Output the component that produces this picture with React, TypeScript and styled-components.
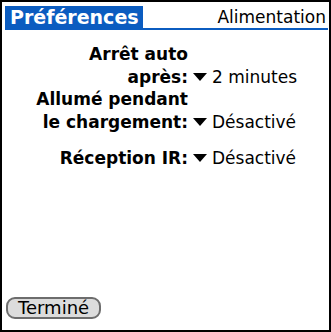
import styled, { createGlobalStyle } from "styled-components";

const Global = createGlobalStyle`
  html, body { margin: 0; padding: 0; background: #fff; }
  * { box-sizing: border-box; }
`;

const PALM_BLUE = "#0b5cc0";

const Screen = styled.div`
  width: 331px;
  height: 332px;
  border: 2px solid #000;
  padding: 4px 1px 0 3px;
  display: flex;
  flex-direction: column;
  background: #fff;
  font-family: "DejaVu Sans", Verdana, sans-serif;
  color: #000;
`;

const TitleBar = styled.div`
  display: flex;
  justify-content: space-between;
  align-items: flex-end;
  height: 24px;
  border-bottom: 2px solid ${PALM_BLUE};
`;

const Tab = styled.div`
  background: ${PALM_BLUE};
  color: #fff;
  font-weight: bold;
  font-size: 19px;
  height: 22px;
  line-height: 23px;
  padding: 0 4px 0 5px;
`;

const Section = styled.div`
  font-size: 17px;
  line-height: 22px;
  padding-right: 2px;
`;

const Form = styled.div`
  margin-top: 13px;
  display: flex;
  flex-direction: column;
`;

const Row = styled.div<{ $spaced?: boolean }>`
  display: grid;
  grid-template-columns: 183px 1fr;
  column-gap: 5px;
  align-items: end;
  margin-top: ${(p) => (p.$spaced ? "14px" : "0")};
`;

const Label = styled.div`
  text-align: right;
  font-weight: bold;
  font-size: 17px;
  line-height: 22.5px;
  white-space: nowrap;
`;

const Picker = styled.div`
  display: flex;
  align-items: center;
  gap: 5px;
  font-size: 17px;
  line-height: 22.5px;
`;

const Arrow = () => (
  <svg width="14" height="8" viewBox="0 0 14 8">
    <polygon points="0,0 14,0 7,8" fill="#000" />
  </svg>
);

const Footer = styled.div`
  margin-top: auto;
  margin-bottom: 11px;
  padding-left: 1px;
`;

const Button = styled.button`
  height: 22px;
  padding: 0 10px;
  border: 2px solid #6d6d6d;
  border-radius: 9px;
  background: #dcdcdc;
  font-family: "DejaVu Sans", Verdana, sans-serif;
  font-size: 18px;
  line-height: 18px;
  color: #000;
`;

const rows = [
  { label: ["Arrêt auto", "après:"], value: "2 minutes" },
  { label: ["Allumé pendant", "le chargement:"], value: "Désactivé" },
  { label: ["Réception IR:"], value: "Désactivé", spaced: true },
];

export default function App() {
  return (
    <>
      <Global />
      <Screen>
        <TitleBar>
          <Tab>Préférences</Tab>
          <Section>Alimentation</Section>
        </TitleBar>
        <Form>
          {rows.map((r) => (
            <Row key={r.label.join(" ")} $spaced={r.spaced}>
              <Label>
                {r.label.map((l, i) => (
                  <div key={i}>{l}</div>
                ))}
              </Label>
              <Picker>
                <Arrow />
                <span>{r.value}</span>
              </Picker>
            </Row>
          ))}
        </Form>
        <Footer>
          <Button>Terminé</Button>
        </Footer>
      </Screen>
    </>
  );
}
